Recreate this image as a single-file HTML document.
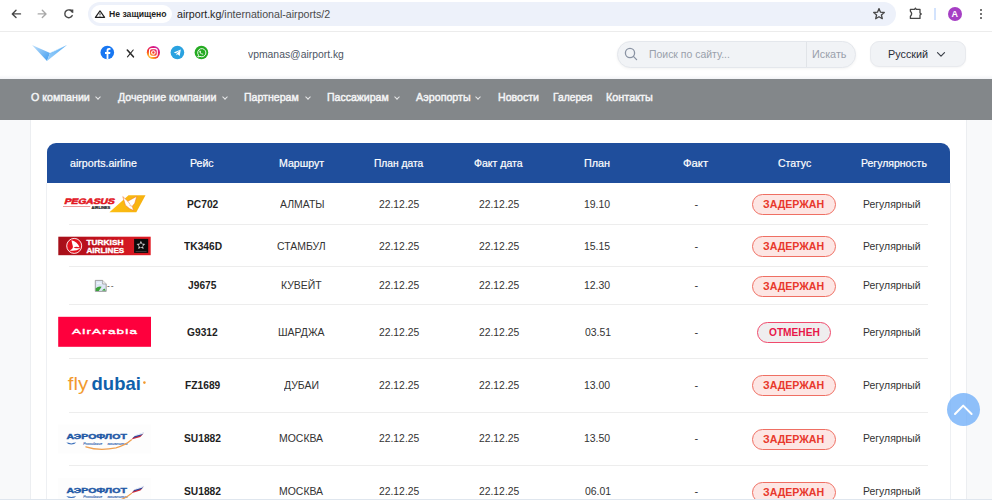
<!DOCTYPE html>
<html><head><meta charset="utf-8">
<style>
*{box-sizing:border-box;margin:0;padding:0}
html,body{width:992px;height:500px;overflow:hidden;background:#f8f9fa;font-family:"Liberation Sans",sans-serif}
.abs{position:absolute}
.tx{position:absolute;white-space:nowrap;transform-origin:0 0;line-height:normal}
#chrome{position:absolute;left:0;top:0;width:992px;height:31px;background:#fff}
#chromeline{position:absolute;left:0;top:31px;width:992px;height:1px;background:#ececec}
#pill{position:absolute;left:88px;top:2px;width:808px;height:24px;border-radius:12px;background:#edf1fa}
#chip{position:absolute;left:91px;top:5px;width:81px;height:18px;border-radius:9px;background:#fff}
.ctext{position:absolute;white-space:nowrap;color:#1f1f1f}
#header{position:absolute;left:0;top:32px;width:992px;height:47px;background:#fff}
#nav{position:absolute;left:0;top:79px;width:992px;height:41px;background:#83878a}
.nv{position:absolute;top:91px;font-size:11px;font-weight:bold;color:#f4f5f6;white-space:nowrap;letter-spacing:-0.1px}
.chev{position:absolute;top:95px;width:4px;height:4px;border-right:1px solid #e8e9ea;border-bottom:1px solid #e8e9ea;transform:rotate(45deg)}
#card{position:absolute;left:30px;top:120px;width:937px;height:380px;background:#fff;border-left:1px solid #eceef1;border-right:1px solid #eceef1}
#tbl{position:absolute;left:46px;top:183px;width:905px;height:317px;border-left:1px solid #eef0f3;border-right:1px solid #eef0f3}
#thead{position:absolute;left:47px;top:143px;width:903px;height:40px;background:#1f4e9c;border-radius:9px 9px 0 0}
.th{position:absolute;top:157px;font-size:11px;color:#fff;white-space:nowrap;transform:translateX(-50%)}
.td{position:absolute;font-size:11px;color:#2b2b2b;white-space:nowrap;transform:translateX(-50%)}
.b{font-weight:bold;color:#1e1e1e}
.sep{position:absolute;left:69px;width:859px;height:1px;background:#ededed}
.badge{position:absolute;height:21px;border-radius:11px;font-size:10px;font-weight:bold;text-align:center;line-height:19px;letter-spacing:0.2px}
.bz{left:752px;width:84px;border:1px solid #ef6f63;background:#fde6e4;color:#e8392c}
.bo{left:757px;width:74px;border:1px solid #f04a6c;background:#efeeef;color:#e81749}
#totop{position:absolute;left:947px;top:393px;width:33px;height:33px;border-radius:50%;background:rgba(112,174,248,0.78)}
</style></head>
<body>
<div id="chrome"></div>
<div id="chromeline"></div>
<!-- back / fwd / reload -->
<svg class="abs" style="left:0;top:0" width="110" height="31" viewBox="0 0 110 31">
  <g fill="none" stroke="#474747" stroke-width="1.4" stroke-linecap="round" stroke-linejoin="round">
    <path d="M20.5 13.9H12.3M16 10.3L12.3 13.9L16 17.5"/>
  </g>
  <g fill="none" stroke="#a8a8a8" stroke-width="1.4" stroke-linecap="round" stroke-linejoin="round">
    <path d="M38.2 13.9H46M42.3 10.3L46 13.9L42.3 17.5"/>
  </g>
  <g fill="none" stroke="#474747" stroke-width="1.4" stroke-linecap="round">
    <path d="M72.3 12.2A3.9 3.9 0 1 0 72.2 15.6"/>
  </g>
  <path d="M69.6 9.4L73.3 9.4L73.3 13.1Z" fill="#474747"/>
</svg>
<div id="pill"></div>
<div id="chip"></div>
<svg class="abs" style="left:0;top:0" width="110" height="31" viewBox="0 0 110 31">
  <path d="M100 10.9L104.6 17.4H95.4Z" fill="none" stroke="#1f1f1f" stroke-width="1.15" stroke-linejoin="round"/>
  <path d="M100 13.2V15.3" stroke="#1f1f1f" stroke-width="0.9"/>
  <circle cx="100" cy="16.3" r="0.45" fill="#1f1f1f"/>
</svg>
<!-- star -->
<svg class="abs" style="left:872px;top:7px" width="14" height="14" viewBox="0 0 14 14">
  <path d="M7 1.6L8.5 5.2L12.3 5.5L9.4 8L10.3 11.7L7 9.7L3.7 11.7L4.6 8L1.7 5.5L5.5 5.2Z" fill="none" stroke="#474747" stroke-width="1.3" stroke-linejoin="round"/>
</svg>
<!-- puzzle -->
<svg class="abs" style="left:908px;top:6px" width="16" height="16" viewBox="0 0 16 16">
  <path d="M2.4 3.3H6.5L7.4 2.1L8.3 3.3H12V6.9L13.3 7.9L12 8.9V12.4H2.4V10.2Q4.9 7.7 2.4 5.2Z" fill="none" stroke="#474747" stroke-width="1.3" stroke-linejoin="round"/>
</svg>
<div class="abs" style="left:934.3px;top:8px;width:1.6px;height:11.5px;background:#d3e3fd"></div>
<div class="abs" style="left:947.5px;top:6.8px;width:14.4px;height:14.4px;border-radius:50%;background:#a63fc4;color:#fff;font-size:9px;font-weight:bold;text-align:center;line-height:14.4px">A</div>
<div class="abs" style="left:980px;top:9px;width:2.2px;height:2.2px;border-radius:50%;background:#474747;box-shadow:0 4px 0 #474747,0 8px 0 #474747"></div>

<div id="header"></div>
<!-- logo -->
<svg class="abs" style="left:28px;top:40px" width="44" height="26" viewBox="0 0 44 26">
  <defs>
    <linearGradient id="lg1" x1="0" y1="0" x2="1" y2="1">
      <stop offset="0" stop-color="#bfe0fb"/><stop offset="1" stop-color="#3f9cf0"/>
    </linearGradient>
    <linearGradient id="lg2" x1="1" y1="0" x2="0" y2="1">
      <stop offset="0" stop-color="#5aaef4"/><stop offset="1" stop-color="#9dd0fa"/>
    </linearGradient>
  </defs>
  <path d="M4 5L22 13L19 21Z" fill="url(#lg1)"/>
  <path d="M39 5L19 21L22 13Z" fill="url(#lg2)"/>
  <path d="M22 12.5L39 5L27 11Z" fill="#d7ecfd"/>
</svg>
<!-- socials -->
<svg class="abs" style="left:98px;top:44px" width="115" height="18" viewBox="0 0 115 18">
  <circle cx="9.3" cy="8.5" r="6.8" fill="#1877f2"/>
  <path d="M10.4 15.3V9.9H12.1L12.4 8H10.4V6.8C10.4 6.2 10.7 5.8 11.5 5.8H12.5V4.2C12.1 4.1 11.5 4.1 11 4.1C9.6 4.1 8.6 4.9 8.6 6.5V8H7V9.9H8.6V15.3Z" fill="#fff"/>
  <path d="M29.3 6L35.4 12.8" stroke="#2a2a2a" stroke-width="1.6" stroke-linecap="round"/><path d="M35.2 6L29.5 12.8" stroke="#2a2a2a" stroke-width="1.1" stroke-linecap="round"/>
  <defs>
    <radialGradient id="ig" cx="0.15" cy="1.0" r="1.25">
      <stop offset="0" stop-color="#ffd25a"/><stop offset="0.28" stop-color="#ff9a1e"/><stop offset="0.5" stop-color="#f53a2a"/><stop offset="0.72" stop-color="#e2186e"/><stop offset="1" stop-color="#b62ad0"/>
    </radialGradient>
  </defs>
  <circle cx="55.4" cy="8.5" r="6.6" fill="url(#ig)"/>
  <rect x="51.5" y="4.6" width="7.8" height="7.8" rx="2.3" fill="none" stroke="#fff" stroke-width="1.1"/>
  <circle cx="55.4" cy="8.5" r="1.8" fill="none" stroke="#fff" stroke-width="1.1"/>
  <circle cx="79.4" cy="8.5" r="6.8" fill="#2aa2e0"/>
  <path d="M75.8 8.6L82.8 5.6L81.7 11.9L79.6 10.2L78.4 11.3L78.4 9.7L82 6.6L77.8 9.3Z" fill="#fff"/>
  <circle cx="103.4" cy="8.5" r="6.8" fill="#25ab22"/>
  <path d="M100.6 11.3A4.1 4.1 0 1 1 102 12.4L99.7 13Z" fill="none" stroke="#fff" stroke-width="0.9" stroke-linejoin="round"/>
  <path d="M101.6 6.6Q101 7.6 101.9 9Q102.9 10.3 104.4 10.6Q105.2 10.6 105.4 10L104.6 9.4L104 9.8Q103 9.4 102.6 8.4L103 7.8L102.4 6.8Z" fill="#fff"/>
</svg>
<!-- search -->
<div class="abs" style="left:617px;top:41px;width:239px;height:27px;border-radius:14px;background:#f1f3f6;border:1px solid #e4e7ec;box-shadow:0 1px 3px rgba(0,0,0,0.05)"></div>
<div class="abs" style="left:806px;top:42px;width:1px;height:25px;background:#e1e4e8"></div>
<svg class="abs" style="left:624px;top:47px" width="15" height="15" viewBox="0 0 15 15">
  <circle cx="6" cy="6" r="4.6" fill="none" stroke="#8a93a3" stroke-width="1.3"/>
  <path d="M9.4 9.4L12.6 12.6" stroke="#8a93a3" stroke-width="1.3" stroke-linecap="round"/>
</svg>
<!-- language -->
<div class="abs" style="left:870px;top:41px;width:96px;height:26px;border-radius:9px;background:#f1f3f6;border:1px solid #e8eaee;box-shadow:0 1px 2px rgba(0,0,0,0.04)"></div>
<svg class="abs" style="left:935px;top:50px" width="12" height="8" viewBox="0 0 12 8">
  <path d="M2.5 2.6L6 6.1L9.5 2.6" fill="none" stroke="#3a3f48" stroke-width="1.2" stroke-linecap="round" stroke-linejoin="round"/>
</svg>

<div class="abs" style="left:0;top:75px;width:992px;height:4px;background:linear-gradient(#fff,#f2f3f6)"></div>
<div id="nav"></div>
<div class="chev" style="left:96px"></div>
<div class="chev" style="left:223px"></div>
<div class="chev" style="left:305.5px"></div>
<div class="chev" style="left:394.5px"></div>
<div class="chev" style="left:476px"></div>




<div id="card"></div>
<div id="tbl"></div>
<div id="thead"></div>

<div id="rows">
<div class="badge bz" style="top:194.0px"></div>
<div class="badge bz" style="top:236.0px"></div>
<div class="badge bz" style="top:275.5px"></div>
<div class="badge bo" style="top:322.0px"></div>
<div class="badge bz" style="top:375.0px"></div>
<div class="badge bz" style="top:428.5px"></div>
<div class="badge bz" style="top:481.7px"></div>
</div>
<div id="seps"><div class="sep" style="top:224px"></div><div class="sep" style="top:266px"></div><div class="sep" style="top:304px"></div><div class="sep" style="top:358px"></div><div class="sep" style="top:412px"></div><div class="sep" style="top:465px"></div></div>
<div id="logos">
<svg class="abs" style="left:0;top:0" width="160" height="500" viewBox="0 0 160 500" font-family="Liberation Sans">
  <defs>
    <linearGradient id="pgy" x1="0" y1="0" x2="1" y2="0">
      <stop offset="0" stop-color="#fcbf14"/><stop offset="1" stop-color="#f7b10f"/>
    </linearGradient>
    <linearGradient id="thy" x1="0" y1="0" x2="1" y2="0">
      <stop offset="0" stop-color="#a50f19"/><stop offset="0.35" stop-color="#bd111c"/><stop offset="1" stop-color="#e11b24"/>
    </linearGradient>
    <g id="aero">
      <rect x="58" y="424.5" width="93" height="29" fill="#fdfdfd"/>
      <text x="66.5" y="439.2" font-size="6.9px" font-weight="bold" fill="#1d58a6" stroke="#1d58a6" stroke-width="0.4" textLength="60.3" lengthAdjust="spacingAndGlyphs">АЭРОФЛОТ</text>
      <path d="M131.4 439.6L134.5 436.2L143.4 433.4L140.4 437Z" fill="#d22a35"/>
      <path d="M132.4 438.2L135.3 435.6L143.8 432.6L141.6 435.3Z" fill="#2a4aa0"/>
      <path d="M133.4 436.6L136.4 434.6L144.2 431.9L142.6 433.9Z" fill="#e8eef8"/>
      <text x="83.3" y="444.8" font-size="3.2px" font-style="italic" fill="#2f63b0" stroke="#2f63b0" stroke-width="0.1" textLength="18.8" lengthAdjust="spacingAndGlyphs">Российские</text><text x="107.6" y="444.8" font-size="3.2px" font-style="italic" fill="#2f63b0" stroke="#2f63b0" stroke-width="0.1" textLength="20" lengthAdjust="spacingAndGlyphs">авиалинии</text>
      <path d="M66.3 442.6Q69 442.6 71.3 443.4Q73.6 442.6 76.3 442.6Q74.5 444.4 71.3 444.5Q68 444.4 66.3 442.6Z" fill="#3a6fbb"/>
      <path d="M85.9 446.8Q99 451.2 116 447.8Q125 445.6 131.5 439.8" fill="none" stroke="#f0a050" stroke-width="1.25" stroke-linecap="round"/>
    </g>
  </defs>
  <!-- Pegasus -->
  <text x="64" y="204.3" font-size="8px" font-weight="bold" fill="#e2161f" stroke="#e2161f" stroke-width="0.55" transform="translate(0 204.3) skewX(-16) translate(0 -204.3)" textLength="50" lengthAdjust="spacingAndGlyphs">PEGASUS</text>
  <rect x="63" y="206.1" width="27.2" height="0.7" fill="#e66a6a"/>
  <text x="91.5" y="208.7" font-size="3.4px" font-weight="bold" fill="#222" stroke="#222" stroke-width="0.2" textLength="18.7" lengthAdjust="spacingAndGlyphs">AIRLINES</text>
  <path d="M128.5 195.2H145.5L136.3 212.2H109.4Z" fill="url(#pgy)"/>
  <path d="M122.8 196.6L127.8 201.2L136.8 196.3L134.8 203.2L132.3 206.3L133.6 210.6L129.4 208.6L125.4 205.2Z" fill="#fff" stroke="#f07a2e" stroke-width="0.6" stroke-linejoin="round"/><path d="M127.8 201.2L130.2 204.6M132.3 206.3L129.6 205.4" fill="none" stroke="#f07a2e" stroke-width="0.5"/>
  <!-- Turkish -->
  <rect x="58.3" y="236.7" width="92.4" height="18.5" fill="url(#thy)"/>
  <circle cx="74.2" cy="245.9" r="7.5" fill="#e2131f" stroke="#fff" stroke-width="0.9"/>
  <path d="M71.5 240.3Q77.5 242 79.5 247.3Q76 246.2 73.5 247.5Q76.5 248.7 80.6 248.2Q75.5 251.6 69.6 250.4Q73.6 248.6 72.8 246Q72 243.4 71.5 240.3Z" fill="#fff"/>
  <text x="86.5" y="244.9" font-size="7.7px" font-weight="bold" fill="#fff" stroke="#fff" stroke-width="0.35" textLength="37" lengthAdjust="spacingAndGlyphs">TURKISH</text>
  <text x="86.5" y="253" font-size="7.7px" font-weight="bold" fill="#fff" stroke="#fff" stroke-width="0.35" textLength="37.7" lengthAdjust="spacingAndGlyphs">AIRLINES</text>
  <rect x="134.1" y="238.9" width="14.1" height="14" fill="#0b0b0b"/>
  <g fill="#c8c8c8" transform="translate(140.9 245.4)"><path transform="rotate(0)" d="M0 -4.6L1.5 -1.6L-1.3 -1.9Z"/><path transform="rotate(72)" d="M0 -4.6L1.5 -1.6L-1.3 -1.9Z"/><path transform="rotate(144)" d="M0 -4.6L1.5 -1.6L-1.3 -1.9Z"/><path transform="rotate(216)" d="M0 -4.6L1.5 -1.6L-1.3 -1.9Z"/><path transform="rotate(288)" d="M0 -4.6L1.5 -1.6L-1.3 -1.9Z"/></g>
  <rect x="135.6" y="251" width="11" height="0.5" fill="#666"/>
  <!-- broken image -->
  <g>
    <path d="M95.3 280.4H102.6L106.2 284V291.4H95.3Z" fill="#dce6f5" stroke="#8a8a8a" stroke-width="0.8"/>
    <path d="M102.6 280.4V284H106.2" fill="#f0f0f0" stroke="#8a8a8a" stroke-width="0.6"/>
    <path d="M95.7 291V288.3Q98.5 285.8 101.6 286.8L98.8 291Z" fill="#3aa23a"/>
    <path d="M101.8 290.6L104.5 288.6L105.8 290.8Z" fill="#3aa23a"/>
    <path d="M97 283.4Q99.5 282.5 101.5 283.6" fill="none" stroke="#fff" stroke-width="0.8"/>
  </g>
  <text x="106.9" y="288.3" font-size="8px" fill="#2a2a2a" textLength="7.8" lengthAdjust="spacingAndGlyphs" letter-spacing="1">--</text>
  <!-- AirArabia -->
  <rect x="58.2" y="316.8" width="92.8" height="30" fill="#fe003d"/>
  <text x="72.1" y="334" font-size="6.8px" fill="#fff" stroke="#fff" stroke-width="0.3" textLength="66" lengthAdjust="spacingAndGlyphs" letter-spacing="0.6">AirArabia</text>
  <!-- flydubai -->
  <text x="67.8" y="390.2" font-size="18.5px" fill="#f29a2e" textLength="20.3" lengthAdjust="spacingAndGlyphs">fly</text>
  <text x="91.6" y="390.2" font-size="18.5px" font-weight="bold" fill="#1061ab" textLength="49.2" lengthAdjust="spacingAndGlyphs">dubai</text>
  <circle cx="144.4" cy="382.6" r="1.3" fill="#f39a2e"/>
  <!-- Aeroflot -->
  <use href="#aero"/>
  <use href="#aero" transform="translate(0 53.6)"/>
</svg>
</div>

<div class="tx" id="sec" style="left:108.82px;top:8.00px;font-size:9.5px;font-weight:bold;color:#1f1f1f;transform:scaleX(0.9090)">Не защищено</div>
<div class="tx" id="url" style="left:177.28px;top:7.50px;font-size:10.5px;color:#1f1f1f;transform:scaleX(1.0132)">airport.kg<span style="color:#4a4a4a">/international-airports/2</span></div>
<div class="tx" id="email" style="left:248.31px;top:47.90px;font-size:11.5px;color:#4d5564;transform:scaleX(0.9021)">vpmanas@airport.kg</div>
<div class="tx" id="ph" style="left:648.95px;top:47.50px;font-size:11px;color:#99a0ab;transform:scaleX(0.9493)">Поиск по сайту...</div>
<div class="tx" id="isk" style="left:812.48px;top:47.50px;font-size:11px;color:#99a0ab;transform:scaleX(0.9818)">Искать</div>
<div class="tx" id="rus" style="left:887.64px;top:47.50px;font-size:11px;color:#2a2f38;transform:scaleX(0.9832)">Русский</div>
<div class="tx" id="nv0" style="left:30.55px;top:91.00px;font-size:11px;color:#f4f5f6;-webkit-text-stroke:0.45px #f4f5f6;transform:scaleX(0.9696)">О компании</div>
<div class="tx" id="nv1" style="left:117.73px;top:91.00px;font-size:11px;color:#f4f5f6;-webkit-text-stroke:0.45px #f4f5f6;transform:scaleX(0.9660)">Дочерние компании</div>
<div class="tx" id="nv2" style="left:244.18px;top:91.00px;font-size:11px;color:#f4f5f6;-webkit-text-stroke:0.45px #f4f5f6;transform:scaleX(0.9601)">Партнерам</div>
<div class="tx" id="nv3" style="left:326.78px;top:91.00px;font-size:11px;color:#f4f5f6;-webkit-text-stroke:0.45px #f4f5f6;transform:scaleX(0.9563)">Пассажирам</div>
<div class="tx" id="nv4" style="left:416.01px;top:91.00px;font-size:11px;color:#f4f5f6;-webkit-text-stroke:0.45px #f4f5f6;transform:scaleX(0.9690)">Аэропорты</div>
<div class="tx" id="nv5" style="left:498.20px;top:91.00px;font-size:11px;color:#f4f5f6;-webkit-text-stroke:0.45px #f4f5f6;transform:scaleX(0.9632)">Новости</div>
<div class="tx" id="nv6" style="left:552.63px;top:91.00px;font-size:11px;color:#f4f5f6;-webkit-text-stroke:0.45px #f4f5f6;transform:scaleX(0.9339)">Галерея</div>
<div class="tx" id="nv7" style="left:605.71px;top:91.00px;font-size:11px;color:#f4f5f6;-webkit-text-stroke:0.45px #f4f5f6;transform:scaleX(0.9845)">Контакты</div>
<div class="tx" id="th0" style="left:70.09px;top:157.00px;font-size:11px;color:#ffffff;-webkit-text-stroke:0.2px #ffffff;transform:scaleX(0.9674)">airports.airline</div>
<div class="tx" id="th1" style="left:190.09px;top:157.00px;font-size:11px;color:#ffffff;-webkit-text-stroke:0.2px #ffffff;transform:scaleX(0.9601)">Рейс</div>
<div class="tx" id="th2" style="left:278.74px;top:157.00px;font-size:11px;color:#ffffff;-webkit-text-stroke:0.2px #ffffff;transform:scaleX(0.9630)">Маршрут</div>
<div class="tx" id="th3" style="left:374.49px;top:157.00px;font-size:11px;color:#ffffff;-webkit-text-stroke:0.2px #ffffff;transform:scaleX(0.9299)">План дата</div>
<div class="tx" id="th4" style="left:474.08px;top:157.00px;font-size:11px;color:#ffffff;-webkit-text-stroke:0.2px #ffffff;transform:scaleX(0.9564)">Факт дата</div>
<div class="tx" id="th5" style="left:584.48px;top:157.00px;font-size:11px;color:#ffffff;-webkit-text-stroke:0.2px #ffffff;transform:scaleX(0.9827)">План</div>
<div class="tx" id="th6" style="left:683.27px;top:157.00px;font-size:11px;color:#ffffff;-webkit-text-stroke:0.2px #ffffff;transform:scaleX(1.0266)">Факт</div>
<div class="tx" id="th7" style="left:778.05px;top:157.00px;font-size:11px;color:#ffffff;-webkit-text-stroke:0.2px #ffffff;transform:scaleX(0.9527)">Статус</div>
<div class="tx" id="th8" style="left:860.72px;top:157.00px;font-size:11px;color:#ffffff;-webkit-text-stroke:0.2px #ffffff;transform:scaleX(0.9514)">Регулярность</div>
<div class="tx" id="r0fl" style="left:186.68px;top:197.70px;font-size:11px;font-weight:bold;color:#1e1e1e;transform:scaleX(0.9300)">PC702</div>
<div class="tx" id="r0rt" style="left:279.57px;top:197.70px;font-size:11px;color:#333;transform:scaleX(0.9500)">АЛМАТЫ</div>
<div class="tx" id="r0d1" style="left:379.22px;top:197.70px;font-size:11px;color:#333;transform:scaleX(0.9400)">22.12.25</div>
<div class="tx" id="r0d2" style="left:478.77px;top:197.70px;font-size:11px;color:#333;transform:scaleX(0.9400)">22.12.25</div>
<div class="tx" id="r0pl" style="left:584.32px;top:197.70px;font-size:11px;color:#333;transform:scaleX(0.9500)">19.10</div>
<div class="tx" id="r0fk" style="left:694.55px;top:197.70px;font-size:11px;color:#333;transform:scaleX(1.0000)">-</div>
<div class="tx" id="r0rg" style="left:862.89px;top:197.70px;font-size:11px;color:#333;transform:scaleX(0.9470)">Регулярный</div>
<div class="tx" id="r1fl" style="left:183.76px;top:239.70px;font-size:11px;font-weight:bold;color:#1e1e1e;transform:scaleX(0.9300)">TK346D</div>
<div class="tx" id="r1rt" style="left:277.43px;top:239.70px;font-size:11px;color:#333;transform:scaleX(0.9500)">СТАМБУЛ</div>
<div class="tx" id="r1d1" style="left:379.22px;top:239.70px;font-size:11px;color:#333;transform:scaleX(0.9400)">22.12.25</div>
<div class="tx" id="r1d2" style="left:478.77px;top:239.70px;font-size:11px;color:#333;transform:scaleX(0.9400)">22.12.25</div>
<div class="tx" id="r1pl" style="left:584.33px;top:239.70px;font-size:11px;color:#333;transform:scaleX(0.9500)">15.15</div>
<div class="tx" id="r1fk" style="left:694.55px;top:239.70px;font-size:11px;color:#333;transform:scaleX(1.0000)">-</div>
<div class="tx" id="r1rg" style="left:862.89px;top:239.70px;font-size:11px;color:#333;transform:scaleX(0.9470)">Регулярный</div>
<div class="tx" id="r2fl" style="left:187.82px;top:279.20px;font-size:11px;font-weight:bold;color:#1e1e1e;transform:scaleX(0.9300)">J9675</div>
<div class="tx" id="r2rt" style="left:281.09px;top:279.20px;font-size:11px;color:#333;transform:scaleX(0.9500)">КУВЕЙТ</div>
<div class="tx" id="r2d1" style="left:379.22px;top:279.20px;font-size:11px;color:#333;transform:scaleX(0.9400)">22.12.25</div>
<div class="tx" id="r2d2" style="left:478.77px;top:279.20px;font-size:11px;color:#333;transform:scaleX(0.9400)">22.12.25</div>
<div class="tx" id="r2pl" style="left:584.32px;top:279.20px;font-size:11px;color:#333;transform:scaleX(0.9500)">12.30</div>
<div class="tx" id="r2fk" style="left:694.55px;top:279.20px;font-size:11px;color:#333;transform:scaleX(1.0000)">-</div>
<div class="tx" id="r2rg" style="left:862.89px;top:279.20px;font-size:11px;color:#333;transform:scaleX(0.9470)">Регулярный</div>
<div class="tx" id="r3fl" style="left:187.28px;top:325.70px;font-size:11px;font-weight:bold;color:#1e1e1e;transform:scaleX(0.9300)">G9312</div>
<div class="tx" id="r3rt" style="left:277.80px;top:325.70px;font-size:11px;color:#333;transform:scaleX(0.9500)">ШАРДЖА</div>
<div class="tx" id="r3d1" style="left:379.22px;top:325.70px;font-size:11px;color:#333;transform:scaleX(0.9400)">22.12.25</div>
<div class="tx" id="r3d2" style="left:478.77px;top:325.70px;font-size:11px;color:#333;transform:scaleX(0.9400)">22.12.25</div>
<div class="tx" id="r3pl" style="left:584.54px;top:325.70px;font-size:11px;color:#333;transform:scaleX(0.9500)">03.51</div>
<div class="tx" id="r3fk" style="left:694.55px;top:325.70px;font-size:11px;color:#333;transform:scaleX(1.0000)">-</div>
<div class="tx" id="r3rg" style="left:862.89px;top:325.70px;font-size:11px;color:#333;transform:scaleX(0.9470)">Регулярный</div>
<div class="tx" id="r4fl" style="left:184.79px;top:378.70px;font-size:11px;font-weight:bold;color:#1e1e1e;transform:scaleX(0.9300)">FZ1689</div>
<div class="tx" id="r4rt" style="left:284.11px;top:378.70px;font-size:11px;color:#333;transform:scaleX(0.9500)">ДУБАИ</div>
<div class="tx" id="r4d1" style="left:379.22px;top:378.70px;font-size:11px;color:#333;transform:scaleX(0.9400)">22.12.25</div>
<div class="tx" id="r4d2" style="left:478.77px;top:378.70px;font-size:11px;color:#333;transform:scaleX(0.9400)">22.12.25</div>
<div class="tx" id="r4pl" style="left:584.32px;top:378.70px;font-size:11px;color:#333;transform:scaleX(0.9500)">13.00</div>
<div class="tx" id="r4fk" style="left:694.55px;top:378.70px;font-size:11px;color:#333;transform:scaleX(1.0000)">-</div>
<div class="tx" id="r4rg" style="left:862.89px;top:378.70px;font-size:11px;color:#333;transform:scaleX(0.9470)">Регулярный</div>
<div class="tx" id="r5fl" style="left:183.69px;top:432.20px;font-size:11px;font-weight:bold;color:#1e1e1e;transform:scaleX(0.9300)">SU1882</div>
<div class="tx" id="r5rt" style="left:279.49px;top:432.20px;font-size:11px;color:#333;transform:scaleX(0.9500)">МОСКВА</div>
<div class="tx" id="r5d1" style="left:379.22px;top:432.20px;font-size:11px;color:#333;transform:scaleX(0.9400)">22.12.25</div>
<div class="tx" id="r5d2" style="left:478.77px;top:432.20px;font-size:11px;color:#333;transform:scaleX(0.9400)">22.12.25</div>
<div class="tx" id="r5pl" style="left:584.32px;top:432.20px;font-size:11px;color:#333;transform:scaleX(0.9500)">13.50</div>
<div class="tx" id="r5fk" style="left:694.55px;top:432.20px;font-size:11px;color:#333;transform:scaleX(1.0000)">-</div>
<div class="tx" id="r5rg" style="left:862.89px;top:432.20px;font-size:11px;color:#333;transform:scaleX(0.9470)">Регулярный</div>
<div class="tx" id="r6fl" style="left:183.69px;top:485.40px;font-size:11px;font-weight:bold;color:#1e1e1e;transform:scaleX(0.9300)">SU1882</div>
<div class="tx" id="r6rt" style="left:279.49px;top:485.40px;font-size:11px;color:#333;transform:scaleX(0.9500)">МОСКВА</div>
<div class="tx" id="r6d1" style="left:379.22px;top:485.40px;font-size:11px;color:#333;transform:scaleX(0.9400)">22.12.25</div>
<div class="tx" id="r6d2" style="left:478.77px;top:485.40px;font-size:11px;color:#333;transform:scaleX(0.9400)">22.12.25</div>
<div class="tx" id="r6pl" style="left:584.54px;top:485.40px;font-size:11px;color:#333;transform:scaleX(0.9500)">06.01</div>
<div class="tx" id="r6fk" style="left:694.55px;top:485.40px;font-size:11px;color:#333;transform:scaleX(1.0000)">-</div>
<div class="tx" id="r6rg" style="left:862.89px;top:485.40px;font-size:11px;color:#333;transform:scaleX(0.9470)">Регулярный</div>
<div class="tx" id="r0st" style="left:763.37px;top:199.10px;font-size:10px;font-weight:bold;color:#e8392c;transform:scaleX(1.0603)">ЗАДЕРЖАН</div>
<div class="tx" id="r1st" style="left:763.37px;top:241.10px;font-size:10px;font-weight:bold;color:#e8392c;transform:scaleX(1.0603)">ЗАДЕРЖАН</div>
<div class="tx" id="r2st" style="left:763.37px;top:280.60px;font-size:10px;font-weight:bold;color:#e8392c;transform:scaleX(1.0603)">ЗАДЕРЖАН</div>
<div class="tx" id="r3st" style="left:768.59px;top:327.10px;font-size:10px;font-weight:bold;color:#e81749;transform:scaleX(1.0167)">ОТМЕНЕН</div>
<div class="tx" id="r4st" style="left:763.37px;top:380.10px;font-size:10px;font-weight:bold;color:#e8392c;transform:scaleX(1.0603)">ЗАДЕРЖАН</div>
<div class="tx" id="r5st" style="left:763.37px;top:433.60px;font-size:10px;font-weight:bold;color:#e8392c;transform:scaleX(1.0603)">ЗАДЕРЖАН</div>
<div class="tx" id="r6st" style="left:763.37px;top:486.80px;font-size:10px;font-weight:bold;color:#e8392c;transform:scaleX(1.0603)">ЗАДЕРЖАН</div><div id="totop"></div>
<svg class="abs" style="left:947px;top:393px" width="33" height="33" viewBox="0 0 33 33">
  <path d="M8 21L16.2 12.6L24.6 21" fill="none" stroke="#fff" stroke-width="2" stroke-linecap="round" stroke-linejoin="round"/>
</svg>
<div class="abs" style="left:0;top:499px;width:992px;height:1px;background:#dfe6ee"></div>
</body></html>
